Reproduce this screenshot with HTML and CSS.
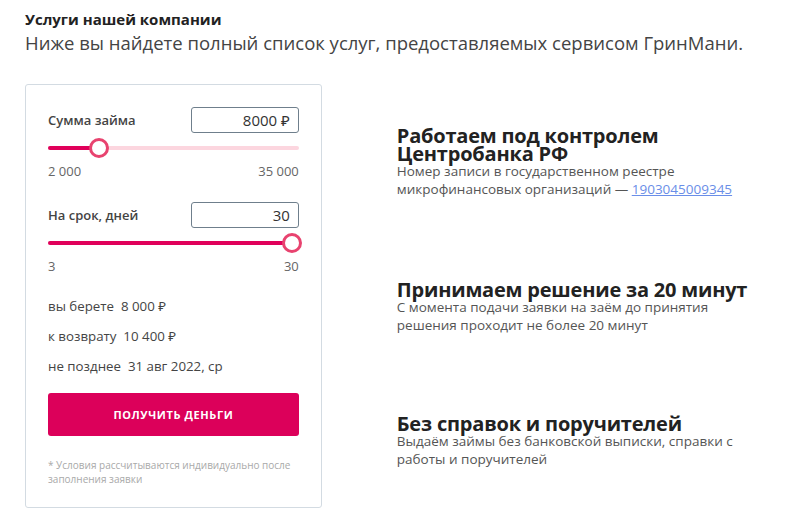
FILE: index.html
```html
<!DOCTYPE html>
<html lang="ru">
<head>
<meta charset="utf-8">
<link rel="stylesheet" href="styles.css">
</head>
<body>
<div class="page">
  <header class="head">
    <h1 class="title">Услуги нашей компании</h1>
    <p class="subtitle">Ниже вы найдете полный список услуг, предоставляемых сервисом ГринМани.</p>
  </header>
  <div class="main">
    <section class="card">
      <div class="field-row">
        <span class="field-label">Сумма займа</span>
        <div class="field-input">8000 ₽</div>
      </div>
      <div class="slider">
        <div class="track"><div class="fill" style="width: 20.5%"></div></div>
        <div class="thumb" style="left: 20.5%"></div>
      </div>
      <div class="range"><span>2 000</span><span>35 000</span></div>

      <div class="field-row second">
        <span class="field-label">На срок, дней</span>
        <div class="field-input">30</div>
      </div>
      <div class="slider">
        <div class="track"><div class="fill" style="width: 100%"></div></div>
        <div class="thumb" style="left: 97.2%"></div>
      </div>
      <div class="range"><span>3</span><span>30</span></div>

      <ul class="summary">
        <li>вы берете&nbsp; 8 000 ₽</li>
        <li>к возврату&nbsp; 10 400 ₽</li>
        <li>не позднее&nbsp; 31 авг 2022, ср</li>
      </ul>
      <button class="cta">получить деньги</button>
      <p class="note">* Условия рассчитываются индивидуально после заполнения заявки</p>
    </section>
    <section class="features">
      <div class="feature f1">
        <h2>Работаем под контролем<br>Центробанка РФ</h2>
        <p>Номер записи в государственном реестре микрофинансовых организаций — <a href="#">1903045009345</a></p>
      </div>
      <div class="feature f2">
        <h2>Принимаем решение за 20 минут</h2>
        <p>С момента подачи заявки на заём до принятия решения проходит не более 20 минут</p>
      </div>
      <div class="feature f3">
        <h2>Без справок и поручителей</h2>
        <p>Выдаём займы без банковской выписки, справки с работы и поручителей</p>
      </div>
    </section>
  </div>
</div>
</body>
</html>
```
FILE: styles.css
```css
* { box-sizing: border-box; }
html, body { margin: 0; padding: 0; background: #fff; }
body { font-family: "Open Sans", "Noto Sans", sans-serif; color: #333; }
.page { padding: 9px 25px 0 25px; }
.title { margin: 0; font-size: 15px; font-weight: 700; line-height: 20px; color: #222; }
.subtitle { margin: 0; font-size: 18.5px; font-weight: 400; line-height: 28px; color: #444; }
.main { display: flex; align-items: flex-start; margin-top: 27px; }
.card {
  width: 298px; border: 1px solid #d3dbe2; border-radius: 3px;
  padding: 22px 22px 21px 22px;
}
.field-row { display: flex; justify-content: space-between; align-items: center; height: 26px; }
.field-row.second { margin-top: 22px; }
.field-label { font-size: 13px; font-weight: 600; color: #444; }
.field-input {
  width: 108px; height: 26px; border: 1px solid #6f7f8c; border-radius: 3px;
  text-align: right; padding: 0 8px; font-size: 15px; line-height: 24px; color: #333;
}
.slider { position: relative; height: 20px; margin-top: 5px; }
.track { position: absolute; left: 0; right: 0; top: 8px; height: 4px; border-radius: 2px; background: #fcd6df; }
.fill { height: 4px; border-radius: 2px; background: #e0005a; }
.thumb {
  position: absolute; top: 0; width: 20px; height: 20px; margin-left: -10px;
  border-radius: 50%; background: #fff; border: 3px solid #e8436f;
}
.range { display: flex; justify-content: space-between; font-size: 13px; color: #666; margin-top: 4px; line-height: 18px; }
.summary { list-style: none; margin: 22px 0 0 0; padding: 0; font-size: 13.3px; color: #444; }
.summary li { line-height: 18px; margin-bottom: 12px; }
.summary li:last-child { margin-bottom: 0; }
.cta {
  display: block; width: 100%; height: 43px; margin-top: 18px; border: 0; border-radius: 3px;
  background: #dc005a; color: #fff; font-family: inherit; font-size: 11px; font-weight: 700;
  text-transform: uppercase; letter-spacing: 0.6px;
}
.note { margin: 22px 0 0 0; font-size: 10px; line-height: 14px; color: #a9a9a9; }
.features { margin-left: 75px; padding-top: 43px; width: 380px; }
.feature h2 { margin: 0; font-size: 20px; font-weight: 700; line-height: 18px; color: #222; letter-spacing: -0.2px; white-space: nowrap; }
.feature p { margin: -1px 0 0 0; max-width: 345px; font-size: 13.5px; line-height: 18px; color: #555; }
.feature a { color: #6a8ee8; }
.f2 { margin-top: 83px; }
.f3 { margin-top: 81px; }
```
